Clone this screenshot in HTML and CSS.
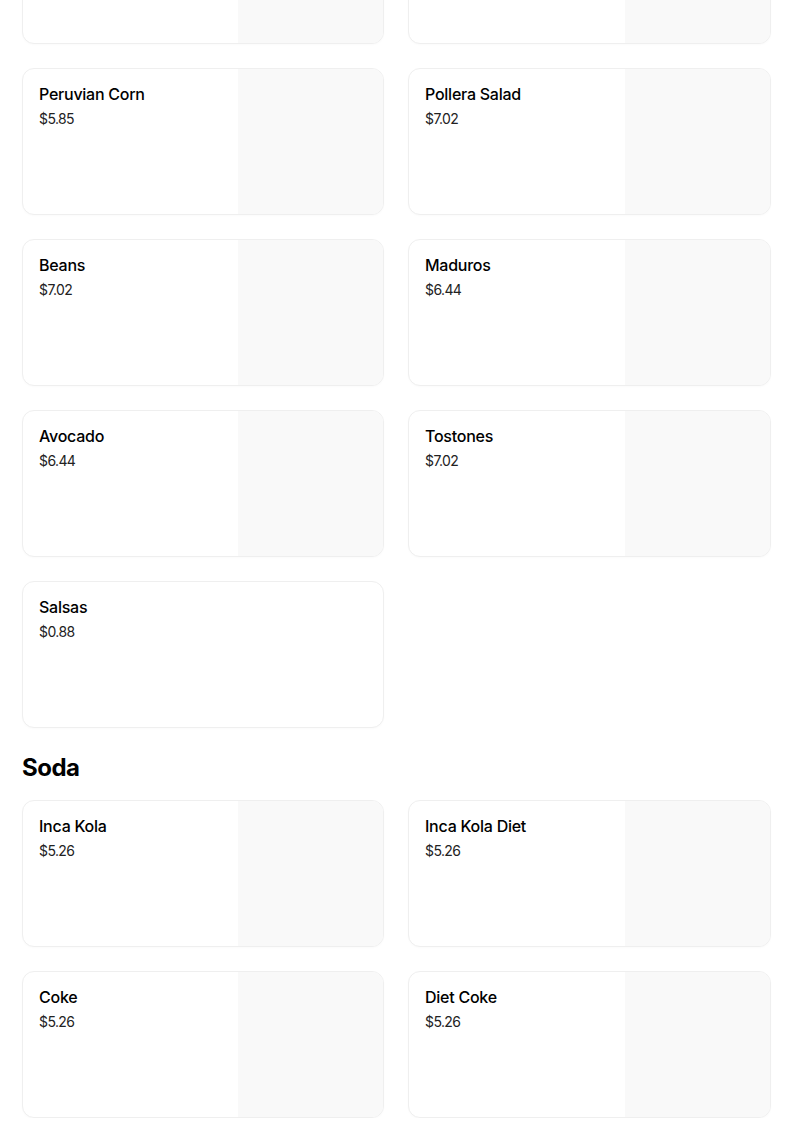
FILE: index.html
```html
<!DOCTYPE html>
<html>
<head>
<meta charset="utf-8">
<link rel="stylesheet" href="styles.css">
</head>
<body>
<main class="menu">
  <section class="section section-cut">
    <div class="grid">
      <div class="card"><div class="info"></div><div class="thumb"></div></div>
      <div class="card"><div class="info"></div><div class="thumb"></div></div>
      <div class="card"><div class="info"><div class="title">Peruvian Corn</div><div class="price">$5.85</div></div><div class="thumb"></div></div>
      <div class="card"><div class="info"><div class="title">Pollera Salad</div><div class="price">$7.02</div></div><div class="thumb"></div></div>
      <div class="card"><div class="info"><div class="title">Beans</div><div class="price">$7.02</div></div><div class="thumb"></div></div>
      <div class="card"><div class="info"><div class="title">Maduros</div><div class="price">$6.44</div></div><div class="thumb"></div></div>
      <div class="card"><div class="info"><div class="title">Avocado</div><div class="price">$6.44</div></div><div class="thumb"></div></div>
      <div class="card"><div class="info"><div class="title">Tostones</div><div class="price">$7.02</div></div><div class="thumb"></div></div>
      <div class="card"><div class="info"><div class="title">Salsas</div><div class="price">$0.88</div></div></div>
    </div>
  </section>
  <section class="section">
    <h2 class="heading">Soda</h2>
    <div class="grid">
      <div class="card"><div class="info"><div class="title">Inca Kola</div><div class="price">$5.26</div></div><div class="thumb"></div></div>
      <div class="card"><div class="info"><div class="title">Inca Kola Diet</div><div class="price">$5.26</div></div><div class="thumb"></div></div>
      <div class="card"><div class="info"><div class="title">Coke</div><div class="price">$5.26</div></div><div class="thumb"></div></div>
      <div class="card"><div class="info"><div class="title">Diet Coke</div><div class="price">$5.26</div></div><div class="thumb"></div></div>
    </div>
  </section>
</main>
</body>
</html>
```
FILE: styles.css
```css
html, body {
  margin: 0;
  padding: 0;
  background: #fff;
  overflow: hidden;
}
body {
  font-family: "Inter", "Liberation Sans", sans-serif;
  color: #000;
}
.menu {
  padding: 0 32px 0 22px;
  margin-top: -103px;
}
.section-cut {
  margin-bottom: 24px;
}
.grid {
  display: grid;
  grid-template-columns: 362px 363px;
  column-gap: 24px;
  row-gap: 24px;
}
.card {
  box-sizing: border-box;
  height: 147px;
  border: 1px solid #efefef;
  border-radius: 12px;
  display: flex;
  overflow: hidden;
  background: #fff;
  box-shadow: 0 1px 2px rgba(0,0,0,0.02);
}
.info {
  flex: 1;
  padding: 13px 16px;
}
.thumb {
  width: 145px;
  flex: none;
  background: #f9f9f9;
}
.title {
  font-size: 16px;
  line-height: 24px;
  font-weight: 500;
  letter-spacing: -0.25px;
}
.price {
  margin-top: 3px;
  font-size: 14px;
  line-height: 20px;
  color: #222;
  letter-spacing: -0.6px;
}
.heading {
  margin: 0 0 16px;
  font-size: 24px;
  line-height: 32px;
  font-weight: 700;
  letter-spacing: -0.5px;
}
```
